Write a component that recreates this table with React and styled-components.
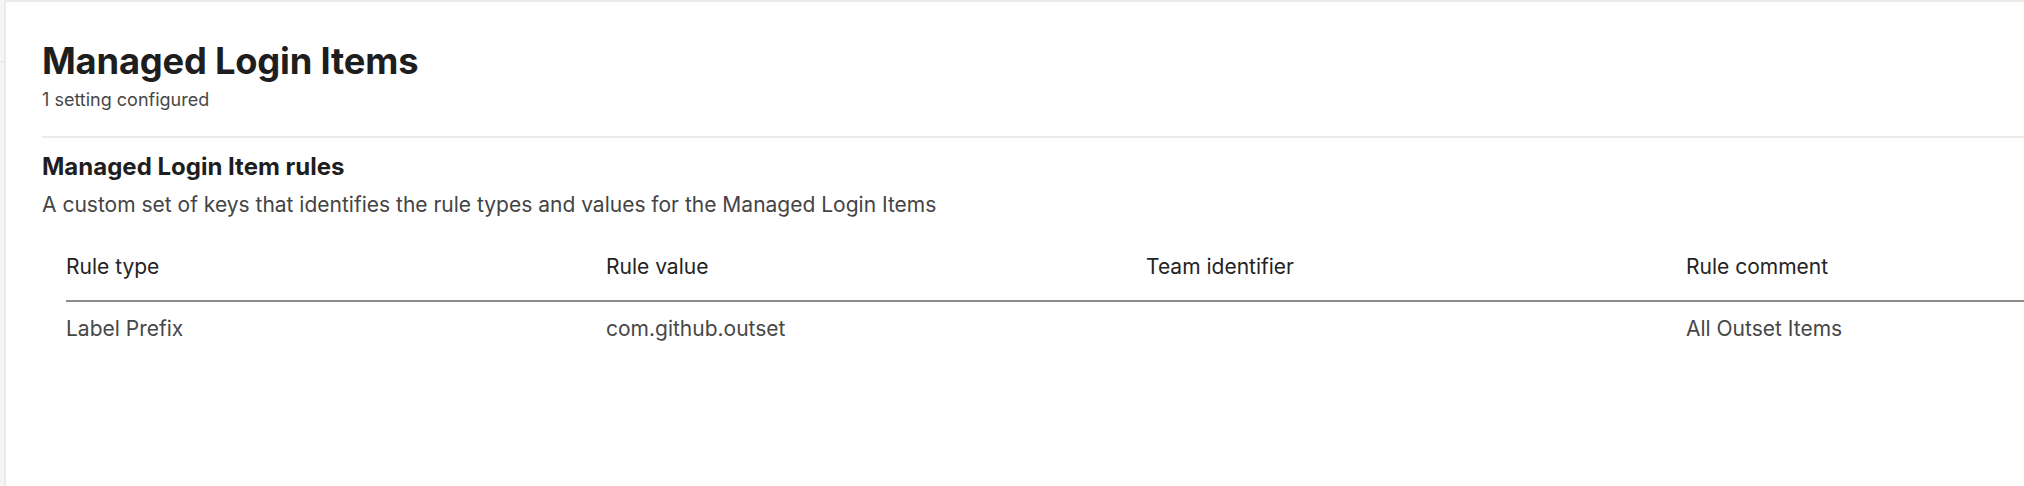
import React from "react";
import styled, { createGlobalStyle } from "styled-components";

const Global = createGlobalStyle`
  html, body, #root {
    margin: 0;
    height: 100%;
  }
  body {
    font-family: Inter, "Liberation Sans", sans-serif;
    background: #ffffff;
    overflow: hidden;
  }
`

const Page = styled.div`
  display: flex;
  height: 100%;
`

const Rail = styled.div`
  width: 4px;
  flex-shrink: 0;
  background: #f5f5f5;
  border-right: 2px solid #ebebeb;
`

const RailTop = styled.div`
  height: 61px;
  border-bottom: 1px solid #e6e6e6;
`

const Main = styled.main`
  flex: 1;
  min-width: 0;
  overflow: hidden;
  border-top: 2px solid #ebebeb;
  padding: 37px 0 0 36px;
`

const Title = styled.h1`
  margin: 0;
  font-size: 36.3px;
  line-height: 44px;
  font-weight: 700;
  color: #1e1e1e;
  letter-spacing: -0.2px;
`

const Subtitle = styled.p`
  margin: 7px 0 0;
  font-size: 18px;
  line-height: 20px;
  color: #474747;
`

const Divider = styled.hr`
  margin: 26px 0 0;
  border: none;
  border-top: 2px solid #ebebeb;
  width: 2400px;
`

const Section = styled.section`
  padding-top: 15px;
`

const SectionTitle = styled.h2`
  margin: 0;
  font-size: 24px;
  line-height: 28px;
  font-weight: 700;
  color: #1e1e1e;
`

const Description = styled.p`
  margin: 11px 0 0;
  font-size: 21px;
  line-height: 26px;
  color: #444444;
`

const Table = styled.table`
  margin: 36px 0 0 24px;
  border-collapse: collapse;
  table-layout: fixed;
  width: 2160px;
`

const HeadCell = styled.th`
  width: 540px;
  padding: 0 0 20px;
  text-align: left;
  font-size: 21px;
  line-height: 26px;
  font-weight: 400;
  color: #242424;
  border-bottom: 2px solid #8c8c8c;
`

const Cell = styled.td`
  padding: 14px 0 0;
  font-size: 21px;
  line-height: 26px;
  color: #474747;
`

const columns = ["Rule type", "Rule value", "Team identifier", "Rule comment"]
const rows = [["Label Prefix", "com.github.outset", "", "All Outset Items"]]

export default function App() {
  return (
    <>
      <Global />
      <Page>
        <Rail>
          <RailTop />
        </Rail>
        <Main>
          <Title>Managed Login Items</Title>
          <Subtitle>1 setting configured</Subtitle>
          <Divider />
          <Section>
            <SectionTitle>Managed Login Item rules</SectionTitle>
            <Description>
              A custom set of keys that identifies the rule types and values for the Managed Login Items
            </Description>
            <Table>
              <thead>
                <tr>
                  {columns.map(c => <HeadCell key={c}>{c}</HeadCell>)}
                </tr>
              </thead>
              <tbody>
                {rows.map((row, i) => (
                  <tr key={i}>
                    {row.map((v, j) => <Cell key={j}>{v}</Cell>)}
                  </tr>
                ))}
              </tbody>
            </Table>
          </Section>
        </Main>
      </Page>
    </>
  )
}
